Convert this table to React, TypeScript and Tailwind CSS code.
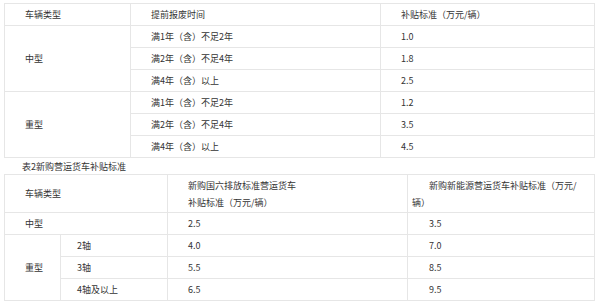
import React from "react";

const F = { fontFamily: '"Noto Sans CJK SC", "Noto Sans", sans-serif' };

export default function App() {
  const td = "border border-[#e6e6e6] pl-[20px] align-middle";
  const t1 = [
    ["中型", ["满1年（含）不足2年", "1.0"], ["满2年（含）不足4年", "1.8"], ["满4年（含）以上", "2.5"]],
    ["重型", ["满1年（含）不足2年", "1.2"], ["满2年（含）不足4年", "3.5"], ["满4年（含）以上", "4.5"]],
  ] as const;
  return (
    <div className="w-[600px] h-[302px] bg-white text-[#333] text-[9px] leading-[17px] overflow-hidden pt-[3px] pl-[4px]" style={F}>
      <table className="border-collapse table-fixed w-[590px]">
        <colgroup>
          <col className="w-[126px]" />
          <col className="w-[250px]" />
          <col className="w-[214px]" />
        </colgroup>
        <tbody>
          <tr className="h-[22px]">
            <td className={td}>车辆类型</td>
            <td className={td}>提前报废时间</td>
            <td className={td}>补贴标准（万元/辆）</td>
          </tr>
          {t1.map((g) =>
            [g[1], g[2], g[3]].map((r, i) => (
              <tr key={g[0] + i} className="h-[22px]">
                {i === 0 && (
                  <td rowSpan={3} className={td}>
                    {g[0]}
                  </td>
                )}
                <td className={td}>{r[0]}</td>
                <td className={td}>{r[1]}</td>
              </tr>
            ))
          )}
        </tbody>
      </table>
      <div className="h-[16px] flex items-center pl-[18px]">表2新购营运货车补贴标准</div>
      <table className="border-collapse table-fixed w-[590px]">
        <colgroup>
          <col className="w-[56px]" />
          <col className="w-[107px]" />
          <col className="w-[240px]" />
          <col className="w-[187px]" />
        </colgroup>
        <tbody>
          <tr className="h-[38px]">
            <td colSpan={2} className={td}>车辆类型</td>
            <td className={td + " pr-[10px]"}>
              新购国六排放标准营运货车
              <br />
              补贴标准（万元/辆）
            </td>
            <td className="border border-[#e6e6e6] pl-[4px] pr-[10px] indent-[17px]">
              新购新能源营运货车补贴标准（万元/辆）
            </td>
          </tr>
          <tr className="h-[22px]">
            <td colSpan={2} className={td}>中型</td>
            <td className={td}>2.5</td>
            <td className="border border-[#e6e6e6] pl-[21px]">3.5</td>
          </tr>
          {[
            ["2轴", "4.0", "7.0"],
            ["3轴", "5.5", "8.5"],
            ["4轴及以上", "6.5", "9.5"],
          ].map((r, i) => (
            <tr key={i} className="h-[22px]">
              {i === 0 && (
                <td rowSpan={3} className={td}>
                  重型
                </td>
              )}
              <td className="border border-[#e6e6e6] pl-[16px]">{r[0]}</td>
              <td className={td}>{r[1]}</td>
              <td className="border border-[#e6e6e6] pl-[21px]">{r[2]}</td>
            </tr>
          ))}
        </tbody>
      </table>
    </div>
  );
}
